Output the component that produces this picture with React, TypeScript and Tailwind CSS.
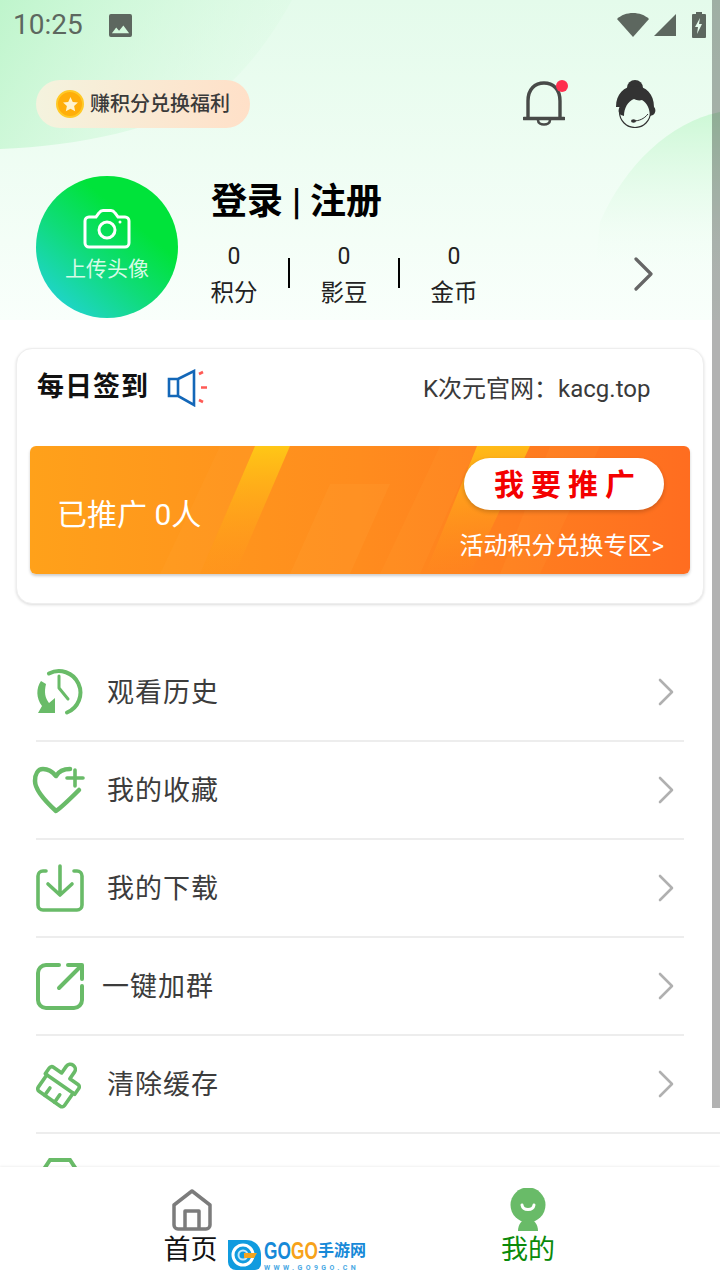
import { ReactNode } from 'react';

const sans = { fontFamily: '"Roboto", "Noto Sans CJK SC", sans-serif' };

function Stat({ label }: { label: string }) {
  return (
    <div className="flex w-[46px] flex-col items-center whitespace-nowrap text-[23.5px] leading-[40px] text-[#222]">
      <span className="text-[23px] leading-[32px]">0</span>
      <span>{label}</span>
    </div>
  );
}

function MenuRow({ icon, title, textClass = 'ml-[23px]', wide }: { icon: ReactNode; title: string; textClass?: string; wide?: boolean }) {
  return (
    <div className="relative flex h-[98px] items-center pl-[36px] pr-[36px]">
      <div className="h-[48px] w-[48px] shrink-0">{icon}</div>
      <span className={`${textClass} flex-1 pt-[2px] text-[27px] tracking-[1px] text-[#3c3c3c]`}>{title}</span>
      <svg viewBox="0 0 16 28" className="mr-[10px] h-[28px] w-[16px]" fill="none" stroke="#b0b0b0" strokeWidth="2.600" strokeLinecap="round" strokeLinejoin="round">
        <path d="M2 2 14 14 2 26" />
      </svg>
      <div className={`absolute bottom-[-1px] left-[36px] h-[2px] bg-[#ededed] ${wide ? 'right-0' : 'right-[36px]'}`} />
    </div>
  );
}

const green = '#69bb68';

const HistoryIcon = (
  <svg viewBox="0 0 48 48" className="h-full w-full" fill="none" stroke={green} strokeWidth="4" strokeLinecap="round" strokeLinejoin="round">
    <path d="M13 5.500A21.500 21.500 0 1 1 31 44.500" />
    <path d="M23 8v12l9 11" strokeWidth="3" />
    <path d="M5 13C0 20 0 30 6 38L2 45H19V30L13 35C9 30 8 24 10 16Z" fill={green} stroke="none" />
  </svg>
);

const HeartIcon = (
  <svg viewBox="0 0 54 50" className="-ml-[4px] h-[50px] w-[54px]" fill="none" stroke={green} strokeWidth="4.500" strokeLinecap="round" strokeLinejoin="round">
    <path d="M38 3C32 3 27 5 24 10 20 5 16 3 11 3 6 3 3 8 3 15c0 9 10 20 21 30 6-4 15-13 23-21" />
    <path d="M43 4v16M35 12h16" strokeWidth="3.600" />
  </svg>
);

const DownloadIcon = (
  <svg viewBox="0 0 48 48" className="h-full w-full" fill="none" stroke={green} strokeWidth="3.600" strokeLinecap="round" strokeLinejoin="round">
    <path d="M10 7H7a5 5 0 0 0-5 5v29a5 5 0 0 0 5 5h34a5 5 0 0 0 5-5V12a5 5 0 0 0-5-5h-3" />
    <path d="M24 2v28M12 20l12 11 12-11" />
  </svg>
);

const ShareIcon = (
  <svg viewBox="0 0 48 48" className="h-full w-full" fill="none" stroke={green} strokeWidth="4" strokeLinecap="round" strokeLinejoin="round">
    <path d="M23 3H10a8 8 0 0 0-8 8v27a8 8 0 0 0 8 8h28a8 8 0 0 0 8-8V24" />
    <path d="M23 26L44 5M32 3h14v14" />
  </svg>
);

const BroomIcon = (
  <svg viewBox="0 0 48 48" className="h-full w-full overflow-visible" fill="none" stroke={green} strokeWidth="3.600" strokeLinecap="round" strokeLinejoin="round">
    <g transform="translate(24 24) rotate(35) translate(-24 -22)">
      <path d="M19 12V4a5 5 0 0 1 10 0v8h10a3 3 0 0 1 3 3v7H6v-7a3 3 0 0 1 3-3Z" />
      <path d="M8 22v15a3 3 0 0 0 3 3h26a3 3 0 0 0 3-3V22" />
      <path d="M18 40V31M30 40V31" />
    </g>
  </svg>
);

export default function App() {
  return (
    <div className="relative h-[1280px] w-[720px] overflow-hidden bg-white" style={sans}>
      {/* header */}
      <div className="relative h-[320px] overflow-hidden bg-gradient-to-b from-[#e4fbeb] to-[#f9fffb]">
        <svg className="absolute inset-0 h-full w-full" viewBox="0 0 720 320" aria-hidden>
          <defs>
            <linearGradient id="blobA" x1="0" y1="0" x2="1" y2="0.3">
              <stop offset="0" stopColor="#bff5cc" />
              <stop offset="1" stopColor="#d4f9dd" stopOpacity="0.15" />
            </linearGradient>
            <linearGradient id="blobB" x1="0" y1="0" x2="0" y2="1">
              <stop offset="0" stopColor="#cdf8d6" />
              <stop offset="0.55" stopColor="#eefdf2" stopOpacity="0.6" />
              <stop offset="0.8" stopColor="#f7fffa" stopOpacity="0" />
            </linearGradient>
          </defs>
          <path d="M0 0H292C270 40 240 80 210 98 160 128 80 146 0 149Z" fill="url(#blobA)" />
          <path d="M720 112C670 122 625 165 600 222L590 320H720Z" fill="url(#blobB)" />
        </svg>

        <div className="relative">
          {/* status bar */}
          <div className="flex h-[50px] items-center pl-[13px] pr-[12px] text-[#5d675f]">
            <span className="text-[28px] leading-none" style={{ fontFamily: 'Roboto, sans-serif' }}>10:25</span>
            <svg viewBox="0 0 24 24" className="ml-[26px] h-[23px] w-[23px]" fill="currentColor">
              <path fillRule="evenodd" d="M2 0h20a2 2 0 0 1 2 2v20a2 2 0 0 1-2 2H2a2 2 0 0 1-2-2V2a2 2 0 0 1 2-2Zm1 20h18l-6-8-4.500 5.500L7.500 14Z" />
            </svg>
            <div className="flex-1" />
            <svg viewBox="0 0 32 24" className="h-[24px] w-[32px]" fill="currentColor">
              <path d="M16 24 0 6C4 2 10 0 16 0s12 2 16 6Z" />
            </svg>
            <svg viewBox="0 0 22 22" className="ml-[5px] h-[22px] w-[22px]" fill="currentColor">
              <path d="M22 0v22H0Z" />
            </svg>
            <svg viewBox="0 0 14 26" className="ml-[16px] mr-[2px] h-[26px] w-[14px]" fill="currentColor">
              <path fillRule="evenodd" d="M4 0h6v2h3a1 1 0 0 1 1 1v22a1 1 0 0 1-1 1H1a1 1 0 0 1-1-1V3a1 1 0 0 1 1-1h3Zm4 6-5 9h3l-1 7 5-10H7Z" />
            </svg>
          </div>

          {/* top actions */}
          <div className="mt-[30px] flex h-[48px] items-center pl-[36px]">
            <div className="flex h-[48px] w-[214px] items-center rounded-full bg-gradient-to-r from-[#f4f3de] to-[#ffe0c8] pl-[20px]">
              <div className="flex h-[28px] w-[28px] items-center justify-center rounded-full border-[2px] border-[#ffc926] bg-[#ffae0a] text-[#fff3d0]">
                <svg viewBox="0 0 24 24" className="h-[17px] w-[17px]" fill="currentColor">
                  <path d="M12 1.500l3.200 6.800 7.300.9-5.400 5 1.500 7.300L12 18l-6.600 3.500 1.500-7.300-5.400-5 7.300-.9Z" />
                </svg>
              </div>
              <span className="ml-[6px] text-[20px] font-medium text-[#3a3a3a]">赚积分兑换福利</span>
            </div>
            <div className="relative ml-[273px] h-[48px] w-[42px]">
              <svg viewBox="0 0 42 48" className="h-full w-full" fill="none" stroke="#484a48" strokeWidth="3.400" strokeLinecap="round">
                <path d="M5 38V21C5 9 12 3 21 3s16 6 16 18v17" />
                <path d="M1 38.500h40" />
                <path d="M15 40c0 6 12 6 12 0" strokeWidth="2.600" />
              </svg>
              <div className="absolute right-[-3px] top-0 h-[12px] w-[12px] rounded-full bg-[#ff2f4e]" />
            </div>
            <svg viewBox="0 0 44 48" className="ml-[48px] h-[48px] w-[44px]">
              <circle cx="22" cy="32" r="15.500" fill="none" stroke="#333" strokeWidth="1.200" />
              <circle cx="22" cy="8" r="8" fill="#333" />
              <path d="M3 27C3 14 11 6 22 6s19 8 19 21c2 2 2 6-1 8l-3 1c0-7-3-13-8-16-3 1-6 0-8-1-6 2-10 9-10 17l-3-1c-3-2-3-6-1-8Z" fill="#333" />
              <path d="M20 41c6 0 11-2 15-7" fill="none" stroke="#333" strokeWidth="1" />
              <ellipse cx="20.500" cy="41" rx="2.500" ry="1.800" fill="#333" />
            </svg>
          </div>

          {/* profile */}
          <div className="mt-[48px] flex pl-[36px]">
            <div className="flex h-[142px] w-[142px] flex-col items-center rounded-full bg-[linear-gradient(40deg,#22d3d6_8%,#0fdc78_42%,#00e33a_68%)] pt-[33px] text-white">
              <svg viewBox="0 0 48 40" className="h-[40px] w-[48px]" fill="none" stroke="currentColor" strokeWidth="3">
                <path d="M6 8h7l3-4c1-1.500 2-2.500 4-2.500h8c2 0 3 1 4 2.500l3 4h7a4 4 0 0 1 4 4v22a4 4 0 0 1-4 4H6a4 4 0 0 1-4-4V12a4 4 0 0 1 4-4Z" />
                <circle cx="24" cy="21" r="8" />
                <circle cx="37" cy="13" r="1.500" fill="currentColor" stroke="none" />
              </svg>
              <span className="mt-[5px] text-[21px] leading-[30px] text-[#d6fbe6]">上传头像</span>
            </div>
            <div className="ml-[33px] flex-1">
              <div className="pt-[1px] text-[36px] font-bold leading-[50px] text-black">登录 | 注册</div>
              <div className="mt-[14px] flex items-center">
                <Stat label="积分" />
                <div className="mx-[31px] -mt-[8px] h-[30px] w-[2px] bg-black" />
                <Stat label="影豆" />
                <div className="mx-[31px] -mt-[8px] h-[30px] w-[2px] bg-black" />
                <Stat label="金币" />
                <svg viewBox="0 0 20 34" className="-mt-[6px] ml-[156px] h-[34px] w-[20px]" fill="none" stroke="#666" strokeWidth="3.200" strokeLinecap="round" strokeLinejoin="round">
                  <path d="M3 2 18 17 3 32" />
                </svg>
              </div>
            </div>
          </div>
        </div>
      </div>

      {/* sign-in card */}
      <div className="mx-[16px] mt-[28px] h-[256px] rounded-[16px] border border-[#eeeeee] bg-white shadow-[0_1px_3px_rgba(0,0,0,0.14)]">
        <div className="flex h-[77px] items-center pl-[20px]">
          <span className="text-[27px] font-bold tracking-[1px] text-[#111]">每日签到</span>
          <svg viewBox="0 0 42 38" className="ml-[18px] h-[38px] w-[42px]" fill="none" strokeWidth="2.600">
            <path d="M2 10h9v17H2ZM11 10 27 2v34l-16-9Z" stroke="#1367b8" />
            <path d="M32 5l4-2M34 18.500h6M32 31l4 2" stroke="#ff5a55" />
          </svg>
          <span className="ml-[214px] pt-[2px] text-[24px] text-[#3a3a3a]">K次元官网：kacg.top</span>
        </div>
        <div className="relative mx-[13px] mt-[20px] h-[128px] overflow-hidden rounded-[6px] bg-gradient-to-r from-[#ffa11a] via-[#ff8c1e] to-[#ff6d20] shadow-[0_2px_3px_rgba(0,0,0,0.2)]">
          <svg className="absolute inset-0 h-full w-full" viewBox="0 0 660 128" preserveAspectRatio="none" aria-hidden>
            <defs>
              <linearGradient id="stripe" x1="0" y1="0" x2="0" y2="1">
                <stop offset="0" stopColor="#ffd414" />
                <stop offset="1" stopColor="#ffa11a" stopOpacity="0" />
              </linearGradient>
            </defs>
            <path d="M225 0H260L205 128H170Z" fill="url(#stripe)" opacity="0.8" />
            <path d="M190 0H225L170 128H130Z" fill="#ffb347" opacity="0.1" />
            <path d="M300 38H360L320 128H260Z" fill="#ffb347" opacity="0.12" />
            <path d="M447 0H500L440 128H395Z" fill="url(#stripe)" opacity="0.7" />
            <path d="M410 0H447L390 128H350Z" fill="#ffb347" opacity="0.1" />
            <path d="M520 0H570L510 128H470Z" fill="#ffb347" opacity="0.1" />
          </svg>
          <div className="relative flex h-full justify-between pr-[26px]">
            <span className="self-center pl-[27px] pt-[9px] text-[30px] text-white">已推广 0人</span>
            <div className="flex h-full flex-col items-end pt-[12px]">
              <div className="flex h-[52px] w-[200px] items-center justify-center rounded-full bg-white pl-[8px] text-[30px] font-bold tracking-[7px] text-[#f40000] shadow-[0_2px_4px_rgba(0,0,0,0.2)]">
                我要推广
              </div>
              <span className="mt-[20px] text-[24px] leading-[32px] text-white">活动积分兑换专区&gt;</span>
            </div>
          </div>
        </div>
      </div>

      {/* menu */}
      <div className="mt-[39px]">
        <MenuRow icon={HistoryIcon} title="观看历史" />
        <MenuRow icon={HeartIcon} title="我的收藏" />
        <MenuRow icon={DownloadIcon} title="我的下载" />
        <MenuRow icon={ShareIcon} title="一键加群" textClass="ml-[18px]" />
        <MenuRow icon={BroomIcon} title="清除缓存" wide />
      </div>

      {/* partly hidden next row icon */}
      <svg viewBox="0 0 48 10" className="absolute left-[36px] top-[1158px] h-[10px] w-[48px]" fill="none" stroke={green} strokeWidth="4">
        <path d="M8 11 14 2h20l6 9" />
      </svg>

      {/* bottom nav */}
      <div className="absolute bottom-0 left-0 flex h-[113px] w-[720px] bg-white shadow-[0_-1px_2px_rgba(0,0,0,0.06)]">
        <div className="flex w-[383px] flex-col items-center pt-[22px]">
          <svg viewBox="0 0 40 42" className="h-[42px] w-[40px]" fill="none" stroke="#7c7c7c" strokeWidth="3.500" strokeLinejoin="round">
            <path d="M2 16 20 2l18 14v20a4 4 0 0 1-4 4H6a4 4 0 0 1-4-4Z" />
            <path d="M13 40V22h14v18" />
          </svg>
          <span className="pt-[2px] pr-[2px] text-[27px] leading-[34px] text-[#111]">首页</span>
        </div>
        <div className="flex w-[290px] flex-col items-center pt-[21px]">
          <svg viewBox="0 0 36 44" className="h-[44px] w-[36px]">
            <circle cx="18" cy="17" r="17.500" fill={green} />
            <path d="M12 17c1 6 11 6 12 0" fill="none" stroke="#fff" strokeWidth="3" strokeLinecap="round" />
            <path d="M8 43c0-7 4-12 10-12s10 5 10 12Z" fill={green} />
          </svg>
          <span className="pt-[1px] text-[27px] leading-[34px] text-[#0a8a0a]">我的</span>
        </div>
      </div>

      {/* watermark logo */}
      <div className="absolute left-[228px] top-[1238px] flex items-start">
        <svg viewBox="0 0 33 32" className="h-[32px] w-[33px]">
          <path d="M0 2h18c9 0 15 6 15 15v9a6 6 0 0 1-6 6H8a8 8 0 0 1-8-8Z" fill="#109bdf" />
          <circle cx="15" cy="17" r="10" fill="none" stroke="#fff" strokeWidth="3" />
          <circle cx="15" cy="17" r="4.500" fill="none" stroke="#bfe7fa" strokeWidth="2" />
          <path d="M16 15h13l-3 5H16Z" fill="#f3a51f" />
        </svg>
        <div className="ml-[3px] flex flex-col items-start">
          <div className="flex h-[26px] items-center whitespace-nowrap font-bold" style={{ fontFamily: '"Liberation Sans", "Noto Sans CJK SC", sans-serif' }}>
            <span className="w-[27px] origin-left scale-x-[0.75] text-[23px] leading-[26px] text-[#1689d8]">GO</span>
            <span className="w-[27px] origin-left scale-x-[0.75] text-[23px] leading-[26px] text-[#f7a21a]">GO</span>
            <span className="text-[16px] leading-[26px] text-[#1689d8]">手游网</span>
          </div>
          <span className="whitespace-nowrap text-[7px] font-bold leading-[8px] tracking-[3.400px] text-[#4aa9e4]">WWW.GO9GO.CN</span>
        </div>
      </div>

      {/* scrollbar */}
      <div className="absolute right-0 top-0 h-[1108px] w-[8px] bg-black/30" />
    </div>
  );
}
